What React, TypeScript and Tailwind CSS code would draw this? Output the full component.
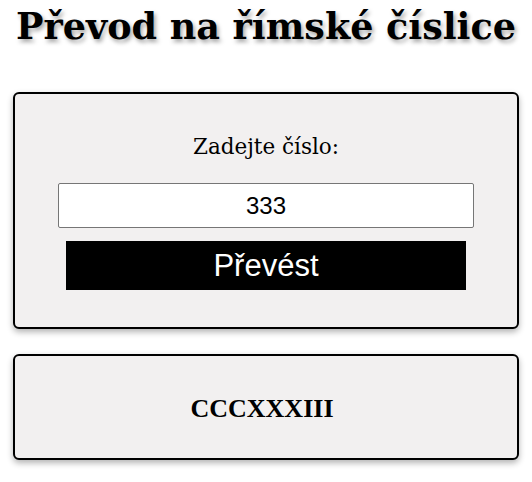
import { useState } from 'react';

const toRoman = (n: number): string => {
  const map: [number, string][] = [
    [1000, 'M'], [900, 'CM'], [500, 'D'], [400, 'CD'],
    [100, 'C'], [90, 'XC'], [50, 'L'], [40, 'XL'],
    [10, 'X'], [9, 'IX'], [5, 'V'], [4, 'IV'], [1, 'I'],
  ];
  let out = '';
  let rest = n;
  for (const [value, sym] of map) {
    while (rest >= value) {
      out += sym;
      rest -= value;
    }
  }
  return out;
};

export default function App() {
  const [value, setValue] = useState('333');
  const [result, setResult] = useState(toRoman(333));

  return (
    <div className="w-[532px] h-[482px] bg-white px-[13px] font-['Liberation_Serif',serif]">
      <h1 className="pt-[4px] text-center text-[36.5px] leading-[46px] font-bold text-black font-['DejaVu_Serif',serif] [text-shadow:2px_3px_4px_rgba(0,0,0,0.35)]">
        Převod na římské číslice
      </h1>

      <div className="mt-[42px] h-[237px] rounded-[6px] border-2 border-black bg-[#f2f0f0] shadow-[0_3px_6px_rgba(0,0,0,0.3)] flex flex-col items-center pt-[40px]">
        <label className="text-[21.5px] leading-[26px] text-black font-['DejaVu_Serif',serif]">Zadejte číslo:</label>
        <input
          value={value}
          onChange={(e) => setValue(e.target.value)}
          className="mt-[23px] w-[416px] h-[45px] border border-[#767676] rounded-[2px] bg-white text-center text-[24px] font-['Liberation_Sans',sans-serif] text-black outline-none"
        />
        <button
          onClick={() => setResult(toRoman(parseInt(value, 10) || 0))}
          className="mt-[13px] w-[400px] h-[49px] bg-black text-white text-[31px] leading-[49px] font-['Liberation_Sans',sans-serif]"
        >
          Převést
        </button>
      </div>

      <div className="mt-[25px] h-[106px] rounded-[6px] border-2 border-black bg-[#f2f0f0] shadow-[0_3px_6px_rgba(0,0,0,0.3)] flex items-center justify-center pt-[3px] pr-[8px]">
        <span className="text-[26px] font-bold text-black">{result}</span>
      </div>
    </div>
  );
}
